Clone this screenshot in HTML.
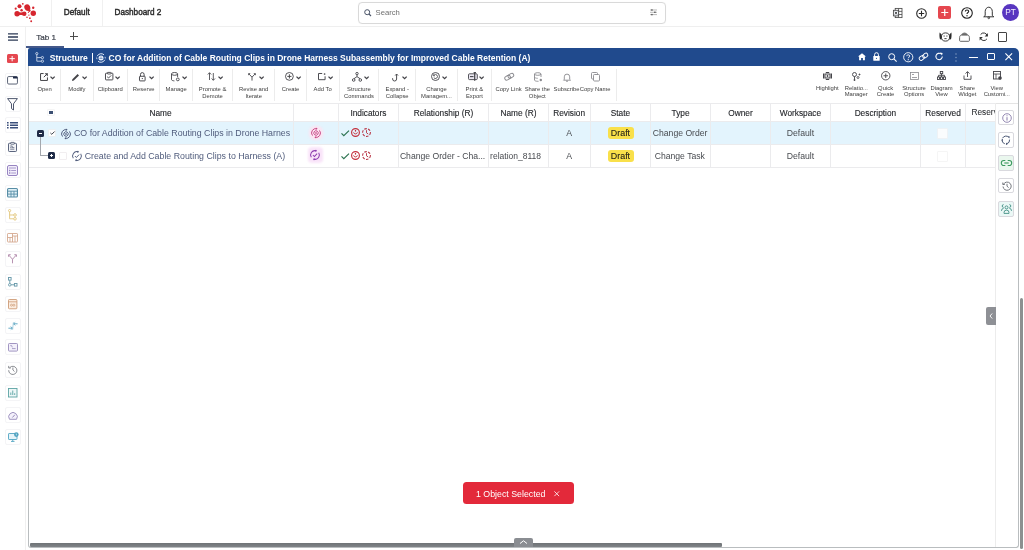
<!DOCTYPE html>
<html><head><meta charset="utf-8">
<style>
*{box-sizing:border-box}
html,body{margin:0;padding:0;width:1024px;height:550px;overflow:hidden;background:#fff;font-family:"Liberation Sans",sans-serif;-webkit-font-smoothing:antialiased}
#root{will-change:transform;position:absolute;left:0;top:0;width:1024px;height:550px;background:#fff}
.a{position:absolute}
.t{position:absolute;white-space:nowrap;line-height:1}
svg{position:absolute;overflow:visible}
.tb{position:absolute;top:0;height:37px}
.tl{position:absolute;width:60px;text-align:center;font-size:5.85px;color:#3d3d3d;line-height:6.7px}
.vs{position:absolute;top:69px;height:32px;width:1px;background:#ececec}
.hd{position:absolute;top:0;height:18px;font-size:8.2px;color:#2c2c2c;text-align:center;line-height:18px;white-space:nowrap}
.cs{position:absolute;top:55px;width:1px;height:64px;background:#e9e9e9}
.cell{position:absolute;font-size:8.7px;color:#5a5a5f;white-space:nowrap;line-height:1}
.sb{position:absolute;left:6px;width:14px;height:14px}
.rp{position:absolute;left:970px;width:16px;height:15px;border:1px solid #dcdcdc;border-radius:2px}
</style></head><body><div id="root">

<!-- TOP BAR -->
<div class="a" style="left:0;top:0;width:1024px;height:27px;border-bottom:1px solid #efefef"></div>
<svg style="left:0;top:0" width="42" height="26" viewBox="0 0 42 26">
 <g fill="#d6262f">
  <ellipse cx="27.3" cy="7.6" rx="2.9" ry="3.3" transform="rotate(-25 27.3 7.6)"/>
  <circle cx="29.3" cy="10.6" r="1.3"/>
  <circle cx="33.3" cy="13.3" r="2.7"/>
  <circle cx="17.1" cy="13.7" r="2.7"/>
  <circle cx="24.2" cy="13.7" r="2.3"/>
  <rect x="17" y="12.4" width="7" height="2.6"/>
  <circle cx="19.5" cy="6.2" r="2"/>
  <circle cx="22.8" cy="3.8" r="0.9"/>
  <circle cx="15.7" cy="8.7" r="1.1"/>
  <circle cx="33.2" cy="7.8" r="1.2"/>
  <circle cx="21.6" cy="10.2" r="1.2"/>
  <circle cx="28.4" cy="12.5" r="0.6"/>
  <circle cx="28.9" cy="15.1" r="0.7"/>
  <circle cx="27" cy="17.3" r="0.8"/>
  <circle cx="29.9" cy="18.2" r="0.9"/>
  <circle cx="31.2" cy="21.3" r="0.95"/>
 </g>
</svg>
<div class="a" style="left:51px;top:0;width:1px;height:26px;background:#f0f0f0"></div>
<div class="a" style="left:102px;top:0;width:1px;height:26px;background:#f0f0f0"></div>
<div class="t" style="left:63.8px;top:9.2px;font-size:8.2px;color:#2a2a2a;-webkit-text-stroke:0.4px #2a2a2a">Default</div>
<div class="t" style="left:114.5px;top:9.2px;font-size:8.2px;color:#2a2a2a;-webkit-text-stroke:0.4px #2a2a2a">Dashboard 2</div>

<div class="a" style="left:358px;top:1.5px;width:308px;height:22px;border:1px solid #d9d9d9;border-radius:4px;box-shadow:0 0 1px #eee"></div>
<svg style="left:364px;top:9px" width="8" height="8" viewBox="0 0 8 8"><circle cx="3.2" cy="3.2" r="2.5" fill="none" stroke="#4a5468" stroke-width="1"/><path d="M5 5L7 7" stroke="#4a5468" stroke-width="1.1"/></svg>
<div class="t" style="left:375.5px;top:8.7px;font-size:7.7px;color:#6f6f6f">Search</div>
<svg style="left:650.3px;top:9px" width="7" height="6.6" viewBox="0 0 7 6.6"><path d="M0 1H7M0 3.3H7M0 5.6H7" stroke="#8a8a8a" stroke-width="0.6"/><rect x="1.2" y="0.3" width="1.4" height="1.4" fill="#555"/><rect x="4.2" y="2.6" width="1.4" height="1.4" fill="#555"/><rect x="1.2" y="4.9" width="1.4" height="1.4" fill="#555"/></svg>

<!-- right top icons -->
<svg style="left:893px;top:7.8px" width="10" height="10" viewBox="0 0 10 10"><rect x="2.2" y="0.4" width="6.8" height="9.2" fill="#fff" stroke="#4a4a4a" stroke-width="0.85"/><path d="M5.6 0.4V9.6M2.2 3.4H9M2.2 6.5H9" stroke="#4a4a4a" stroke-width="0.8"/><rect x="0.4" y="2.3" width="5.2" height="5.6" fill="#eef1f6" stroke="#4a4a4a" stroke-width="0.85"/><path d="M1.9 3.8L4.1 6.4M4.1 3.8L1.9 6.4" stroke="#333" stroke-width="0.8"/></svg>
<svg style="left:916px;top:7.5px" width="11" height="11" viewBox="0 0 11 11"><circle cx="5.5" cy="5.5" r="4.8" fill="none" stroke="#2a2a2a" stroke-width="1.1"/><path d="M5.5 2.8V8.2M2.8 5.5H8.2" stroke="#2a2a2a" stroke-width="1.1"/></svg>
<div class="a" style="left:937.5px;top:6px;width:13.5px;height:13px;background:#e5474f;border-radius:2px"></div>
<svg style="left:937.5px;top:6px" width="13.5" height="13" viewBox="0 0 13.5 13"><path d="M6.75 3V10M3.25 6.5H10.25" stroke="#fff" stroke-width="1.2"/></svg>
<svg style="left:960.5px;top:6.5px" width="12" height="12" viewBox="0 0 12 12"><circle cx="6" cy="6" r="5.3" fill="none" stroke="#222" stroke-width="1.1"/><path d="M4.3 4.6C4.3 3.5 5 3 6 3S7.7 3.6 7.7 4.5C7.7 5.5 6 5.6 6 7" fill="none" stroke="#222" stroke-width="1.1"/><circle cx="6" cy="8.8" r="0.7" fill="#222"/></svg>
<svg style="left:982.8px;top:5.8px" width="11.5" height="13" viewBox="0 0 11.5 13"><path d="M2.2 9.6V5.4C2.2 3.3 3.7 1.2 5.75 1.2S9.3 3.3 9.3 5.4V9.6L10.8 10.8H0.7Z" fill="none" stroke="#2a2a2a" stroke-width="0.95" stroke-linejoin="round"/><circle cx="5.75" cy="11.8" r="0.9" fill="none" stroke="#2a2a2a" stroke-width="0.8"/></svg>
<div class="a" style="left:1002.2px;top:4.1px;width:16.9px;height:16.9px;border-radius:50%;background:#5836c0"></div>
<div class="t" style="left:1002.2px;top:8.2px;width:16.9px;text-align:center;font-size:8.3px;color:#f4efff">PT</div>

<!-- SIDEBAR -->
<div class="a" style="left:25px;top:27px;width:1px;height:523px;background:#f0f0f0"></div>
<svg style="left:7.5px;top:33px" width="10" height="8" viewBox="0 0 10 8"><path d="M0 0.8H10M0 4H10M0 7.2H10" stroke="#2d3a55" stroke-width="1.3"/></svg>

<!-- TAB BAR -->
<div class="t" style="left:36.3px;top:34px;font-size:8.1px;color:#3a3f4a;-webkit-text-stroke:0.2px #3a3f4a">Tab 1</div>
<div class="a" style="left:26px;top:46px;width:38px;height:2px;background:#44598a"></div>
<svg style="left:70px;top:32px" width="8" height="8" viewBox="0 0 8 8"><path d="M3.5 0V8M0 4.5H8" stroke="#444" stroke-width="0.95"/></svg>

<!-- WINDOW -->
<div class="a" style="left:28px;top:60px;width:991px;height:488px;border:1px solid #b9bdbf;border-top:none;border-radius:0 0 3px 3px"></div>
<div class="a" style="left:28px;top:48px;width:991px;height:18px;background:#204a8d;border-radius:2px 5px 0 0"></div>

<div id="win" class="a" style="left:0;top:0;width:1024px;height:550px">
<svg style="left:35px;top:52px" width="10" height="11" viewBox="0 0 10 11"><g fill="none" stroke="#dde6f4" stroke-width="0.8"><circle cx="1.8" cy="1.6" r="1.1"/><path d="M1.8 2.7V9.2H6.2M1.8 5.6H6.2"/><circle cx="7.4" cy="5.6" r="1.15"/><circle cx="7.4" cy="9.2" r="1.15"/></g></svg>
<div class="t" style="left:49.8px;top:54px;font-size:8.55px;font-weight:bold;color:#fff">Structure</div>
<div class="a" style="left:92px;top:53px;width:1.2px;height:9.5px;background:#fff"></div>
<svg style="left:95.5px;top:53px" width="10" height="10" viewBox="0 0 10 10"><g fill="none" stroke="#e6eefb" stroke-width="0.95"><path d="M1.2 3.2A4.3 4.3 0 0 1 8 1.8"/><path d="M8.8 6.8A4.3 4.3 0 0 1 2 8.2"/><path d="M0.7 4.6A4.3 4.3 0 0 0 1 6.2"/><path d="M9.3 5.4A4.3 4.3 0 0 0 9 3.8"/></g><circle cx="5" cy="5" r="2.5" fill="#e6eefb"/><circle cx="5" cy="4" r="0.5" fill="#1f4b8f"/><circle cx="4.1" cy="5.6" r="0.5" fill="#1f4b8f"/><circle cx="5.9" cy="5.6" r="0.5" fill="#1f4b8f"/></svg>
<div class="t" style="left:108.5px;top:54px;font-size:8.5px;font-weight:bold;color:#fff">CO for Addition of Cable Routing Clips in Drone Harness Subassembly for Improved Cable Retention (A)</div>
<svg style="left:857.5px;top:53.3px" width="8" height="7.2" viewBox="0 0 8 7.2"><path d="M4 0.2L8 3.6H6.9V7.2H4.9V5H3.1V7.2H1.1V3.6H0Z" fill="#fff"/></svg>
<svg style="left:873.3px;top:51.8px" width="7" height="9" viewBox="0 0 7 9"><path d="M1.6 4V2.6A1.9 1.9 0 0 1 5.4 2.6V4" fill="none" stroke="#fff" stroke-width="1"/><rect x="0.3" y="4" width="6.4" height="4.8" rx="0.6" fill="#fff"/><circle cx="3.5" cy="6.3" r="0.6" fill="#1f4b8f"/></svg>
<svg style="left:888px;top:52.5px" width="9" height="9" viewBox="0 0 9 9"><circle cx="3.7" cy="3.7" r="3" fill="none" stroke="#fff" stroke-width="1"/><path d="M5.9 5.9L8.6 8.6" stroke="#fff" stroke-width="1.1"/></svg>
<svg style="left:902.7px;top:51.5px" width="10.5" height="10.5" viewBox="0 0 10.5 10.5"><circle cx="5.25" cy="5.25" r="4.6" fill="none" stroke="#fff" stroke-width="0.9"/><path d="M3.8 4.2C3.8 3.2 4.5 2.8 5.25 2.8S6.7 3.3 6.7 4.1C6.7 5 5.25 5.1 5.25 6.3" fill="none" stroke="#fff" stroke-width="0.9"/><circle cx="5.25" cy="7.7" r="0.6" fill="#fff"/></svg>
<svg style="left:918.2px;top:51.8px" width="11" height="9.5" viewBox="0 0 11 9.5"><g fill="none" stroke="#fff" stroke-width="0.95" transform="rotate(-35 5.5 4.75)"><rect x="0.6" y="2.9" width="5.6" height="3.7" rx="1.85"/><rect x="4.8" y="2.9" width="5.6" height="3.7" rx="1.85"/></g></svg>
<svg style="left:934.5px;top:52px" width="8.5" height="9" viewBox="0 0 8.5 9"><path d="M7.3 4.6A3.2 3.2 0 1 1 6 1.9" fill="none" stroke="#fff" stroke-width="1.1"/><path d="M4.8 0.4L7.6 0.9L7 3.6Z" fill="#fff"/></svg>
<svg style="left:955.3px;top:52.5px" width="2" height="9" viewBox="0 0 2 9"><circle cx="1" cy="1" r="0.65" fill="#8fa6c8"/><circle cx="1" cy="4.5" r="0.65" fill="#8fa6c8"/><circle cx="1" cy="8" r="0.65" fill="#8fa6c8"/></svg>
<div class="a" style="left:969px;top:56.8px;width:9px;height:1.2px;background:#fff"></div>
<div class="a" style="left:987px;top:52.5px;width:7.6px;height:7.6px;border:1.1px solid #fff;border-radius:1px"></div>
<svg style="left:1005px;top:52.5px" width="7.5" height="7.5" viewBox="0 0 7.5 7.5"><path d="M0.4 0.4L7.1 7.1M7.1 0.4L0.4 7.1" stroke="#fff" stroke-width="1.1"/></svg>
<div class="vs" style="left:60.0px"></div>
<div class="vs" style="left:92.8px"></div>
<div class="vs" style="left:127.2px"></div>
<div class="vs" style="left:159.3px"></div>
<div class="vs" style="left:192.0px"></div>
<div class="vs" style="left:232.3px"></div>
<div class="vs" style="left:274.2px"></div>
<div class="vs" style="left:305.8px"></div>
<div class="vs" style="left:338.5px"></div>
<div class="vs" style="left:378.4px"></div>
<div class="vs" style="left:415.1px"></div>
<div class="vs" style="left:457.0px"></div>
<div class="vs" style="left:490.8px"></div>
<div class="vs" style="left:615.5px"></div>
<div class="a" style="left:29px;top:102.5px;width:989px;height:1px;background:#e4e4e4"></div>
<svg style="left:39.5px;top:72.8px" width="8" height="8" viewBox="0 0 8 8"><path d="M3.6 0.55H0.55V7.45H7.45V4.4" fill="none" stroke="#434348" stroke-width="1"/><path d="M3.8 4.2L7.2 0.8" stroke="#434348" stroke-width="1"/><path d="M4.6 0.2H7.8V3.4Z" fill="#434348"/></svg>
<svg style="left:49.5px;top:76.3px" width="5.2" height="3.4" viewBox="0 0 5.2 3.4"><path d="M0.5 0.6L2.6 2.7L4.7 0.6" fill="none" stroke="#434348" stroke-width="1.3"/></svg>
<div class="tl" style="left:14.6px;top:86.3px;width:60px">Open</div>
<svg style="left:70.5px;top:72.5px" width="9" height="9" viewBox="0 0 9 9"><path d="M1 8L1.4 6.2L6.6 1L8 2.4L2.8 7.6Z" fill="#434348"/></svg>
<svg style="left:81.5px;top:76.3px" width="5.2" height="3.4" viewBox="0 0 5.2 3.4"><path d="M0.5 0.6L2.6 2.7L4.7 0.6" fill="none" stroke="#434348" stroke-width="1.3"/></svg>
<div class="tl" style="left:46.9px;top:86.3px;width:60px">Modify</div>
<svg style="left:105px;top:72.4px" width="8.4" height="8.4" viewBox="0 0 8.4 8.4"><rect x="0.5" y="1.2" width="7.4" height="6.7" rx="0.6" fill="none" stroke="#434348" stroke-width="0.95"/><rect x="2.5" y="0.4" width="3.4" height="1.6" rx="0.3" fill="#fff" stroke="#434348" stroke-width="0.85"/><path d="M2.2 4.8L3.6 6L6.2 3.4" fill="none" stroke="#434348" stroke-width="0.95"/></svg>
<svg style="left:114.8px;top:76.3px" width="5.2" height="3.4" viewBox="0 0 5.2 3.4"><path d="M0.5 0.6L2.6 2.7L4.7 0.6" fill="none" stroke="#434348" stroke-width="1.3"/></svg>
<div class="tl" style="left:80.3px;top:86.3px;width:60px">Clipboard</div>
<svg style="left:139.2px;top:71.9px" width="6.6" height="9.4" viewBox="0 0 6.6 9.4"><path d="M1.5 4.3V2.4A1.8 1.8 0 0 1 5.1 2.4V4.3" fill="none" stroke="#434348" stroke-width="0.95"/><rect x="0.5" y="4.3" width="5.6" height="4.6" rx="0.4" fill="none" stroke="#434348" stroke-width="0.95"/><rect x="2.8" y="6" width="1" height="1.1" fill="#434348"/></svg>
<svg style="left:149px;top:76.3px" width="5.2" height="3.4" viewBox="0 0 5.2 3.4"><path d="M0.5 0.6L2.6 2.7L4.7 0.6" fill="none" stroke="#434348" stroke-width="1.3"/></svg>
<div class="tl" style="left:113.7px;top:86.3px;width:60px">Reserve</div>
<svg style="left:171px;top:72.2px" width="9" height="9.4" viewBox="0 0 9 9.4"><path d="M0.5 1.9V7.6C0.5 8.3 1.8 8.8 3.4 8.9M6.6 1.9V5" fill="none" stroke="#434348" stroke-width="0.9"/><ellipse cx="3.55" cy="1.9" rx="3.05" ry="1.4" fill="none" stroke="#434348" stroke-width="0.9"/><circle cx="6.8" cy="7.4" r="1.4" fill="#fff" stroke="#434348" stroke-width="0.9"/></svg>
<svg style="left:181.5px;top:76.3px" width="5.2" height="3.4" viewBox="0 0 5.2 3.4"><path d="M0.5 0.6L2.6 2.7L4.7 0.6" fill="none" stroke="#434348" stroke-width="1.3"/></svg>
<div class="tl" style="left:146.1px;top:86.3px;width:60px">Manage</div>
<svg style="left:206.7px;top:72.3px" width="9" height="9" viewBox="0 0 9 9"><path d="M2.5 8V0.8M0.8 2.5L2.5 0.7L4.2 2.5M6.3 1V8.2M4.6 6.5L6.3 8.3L8 6.5" fill="none" stroke="#434348" stroke-width="0.85"/></svg>
<svg style="left:217.7px;top:76.3px" width="5.2" height="3.4" viewBox="0 0 5.2 3.4"><path d="M0.5 0.6L2.6 2.7L4.7 0.6" fill="none" stroke="#434348" stroke-width="1.3"/></svg>
<div class="tl" style="left:182.6px;top:86.3px;width:60px">Promote &amp;</div><div class="tl" style="left:182.6px;top:92.6px;width:60px">Demote</div>
<svg style="left:248.2px;top:72.8px" width="8" height="7.6" viewBox="0 0 8 7.6"><path d="M4 7.6V4.2L1.1 1.1M4 4.2L6.9 1.1" fill="none" stroke="#434348" stroke-width="0.9"/><path d="M0.2 0.2H2.6L0.2 2.6Z M7.8 0.2H5.4L7.8 2.6Z" fill="#434348"/></svg>
<svg style="left:258.5px;top:76.3px" width="5.2" height="3.4" viewBox="0 0 5.2 3.4"><path d="M0.5 0.6L2.6 2.7L4.7 0.6" fill="none" stroke="#434348" stroke-width="1.3"/></svg>
<div class="tl" style="left:223.7px;top:86.3px;width:60px">Revise and</div><div class="tl" style="left:223.7px;top:92.6px;width:60px">Iterate</div>
<svg style="left:284.8px;top:71.9px" width="8.8" height="8.8" viewBox="0 0 8.8 8.8"><circle cx="4.4" cy="4.4" r="3.9" fill="none" stroke="#434348" stroke-width="0.9"/><path d="M4.4 2.3V6.5M2.3 4.4H6.5" stroke="#434348" stroke-width="0.95"/></svg>
<svg style="left:295.6px;top:76.3px" width="5.2" height="3.4" viewBox="0 0 5.2 3.4"><path d="M0.5 0.6L2.6 2.7L4.7 0.6" fill="none" stroke="#434348" stroke-width="1.3"/></svg>
<div class="tl" style="left:260.5px;top:86.3px;width:60px">Create</div>
<svg style="left:318px;top:73.3px" width="7.6" height="7.2" viewBox="0 0 7.6 7.2"><path d="M4.2 0.5H0.5V6.7H7.1V3.3" fill="none" stroke="#434348" stroke-width="0.95"/><circle cx="6.6" cy="1" r="0.85" fill="#434348"/></svg>
<svg style="left:328px;top:76.3px" width="5.2" height="3.4" viewBox="0 0 5.2 3.4"><path d="M0.5 0.6L2.6 2.7L4.7 0.6" fill="none" stroke="#434348" stroke-width="1.3"/></svg>
<div class="tl" style="left:292.6px;top:86.3px;width:60px">Add To</div>
<svg style="left:352px;top:72px" width="10" height="10" viewBox="0 0 10 10"><g fill="none" stroke="#434348" stroke-width="0.9"><circle cx="5" cy="1.6" r="1.2"/><circle cx="1.7" cy="8" r="1.3"/><circle cx="8.3" cy="8" r="1.3"/><path d="M5 2.8V4.6M2 6.7L5 4.6L8 6.7"/></g></svg>
<svg style="left:363.5px;top:76.3px" width="5.2" height="3.4" viewBox="0 0 5.2 3.4"><path d="M0.5 0.6L2.6 2.7L4.7 0.6" fill="none" stroke="#434348" stroke-width="1.3"/></svg>
<div class="tl" style="left:328.9px;top:86.3px;width:60px">Structure</div><div class="tl" style="left:328.9px;top:92.6px;width:60px">Commands</div>
<svg style="left:392.2px;top:73px" width="7" height="8.5" viewBox="0 0 7 8.5"><path d="M4.6 1.2V6A2 2 0 0 1 0.6 6V5.2M3.2 2.5L4.6 1L6 2.5" fill="none" stroke="#434348" stroke-width="0.95"/></svg>
<svg style="left:401.5px;top:76.3px" width="5.2" height="3.4" viewBox="0 0 5.2 3.4"><path d="M0.5 0.6L2.6 2.7L4.7 0.6" fill="none" stroke="#434348" stroke-width="1.3"/></svg>
<div class="tl" style="left:367.2px;top:86.3px;width:60px">Expand -</div><div class="tl" style="left:367.2px;top:92.6px;width:60px">Collapse</div>
<svg style="left:431px;top:72.3px" width="9" height="9" viewBox="0 0 9 9"><circle cx="4.5" cy="4.5" r="4" fill="none" stroke="#434348" stroke-width="0.9"/><path d="M2.8 5.6A2 2 0 1 0 3 3.2M2.5 2.4V3.8H3.9" fill="none" stroke="#434348" stroke-width="0.85"/></svg>
<svg style="left:441.8px;top:76.3px" width="5.2" height="3.4" viewBox="0 0 5.2 3.4"><path d="M0.5 0.6L2.6 2.7L4.7 0.6" fill="none" stroke="#434348" stroke-width="1.3"/></svg>
<div class="tl" style="left:406.5px;top:86.3px;width:60px">Change</div><div class="tl" style="left:406.5px;top:92.6px;width:60px">Managem...</div>
<svg style="left:468px;top:72px" width="10" height="9" viewBox="0 0 10 9"><rect x="0.5" y="1.8" width="8.8" height="5.8" rx="1" fill="#ebe8f2" stroke="#434348" stroke-width="0.9"/><path d="M2 4.6H5.5" stroke="#434348" stroke-width="1.1"/><path d="M6.7 0.4V8.8" stroke="#434348" stroke-width="1.2"/><path d="M5.6 0.5H8" stroke="#434348" stroke-width="0.9"/></svg>
<svg style="left:479.1px;top:76.3px" width="5.2" height="3.4" viewBox="0 0 5.2 3.4"><path d="M0.5 0.6L2.6 2.7L4.7 0.6" fill="none" stroke="#434348" stroke-width="1.3"/></svg>
<div class="tl" style="left:444.4px;top:86.3px;width:60px">Print &amp;</div><div class="tl" style="left:444.4px;top:92.6px;width:60px">Export</div>
<svg style="left:503.5px;top:72px" width="10.5" height="9.5" viewBox="0 0 10.5 9.5"><g fill="none" stroke="#8a8a8f" stroke-width="0.95" transform="rotate(-30 5.25 4.75)"><rect x="0.4" y="2.85" width="5.9" height="3.8" rx="1.9"/><rect x="4.2" y="2.85" width="5.9" height="3.8" rx="1.9"/></g></svg>
<div class="tl" style="left:488.6px;top:86.3px;width:40px">Copy Link</div>
<svg style="left:534px;top:72.2px" width="9" height="10" viewBox="0 0 9 10"><path d="M0.5 2V8C0.5 8.8 2 9.3 3.8 9.3H4.5M7 2V5" fill="none" stroke="#8a8a8f" stroke-width="0.9"/><ellipse cx="3.75" cy="2" rx="3.25" ry="1.3" fill="none" stroke="#8a8a8f" stroke-width="0.9"/><path d="M0.5 5C0.5 5.8 2 6.3 3.8 6.3" fill="none" stroke="#8a8a8f" stroke-width="0.8"/><circle cx="6.8" cy="8" r="1.2" fill="#8a8a8f"/></svg>
<div class="tl" style="left:517.3px;top:86.3px;width:40px">Share the</div><div class="tl" style="left:517.3px;top:92.6px;width:40px">Object</div>
<svg style="left:562.5px;top:72.5px" width="8" height="9" viewBox="0 0 8 9"><path d="M1.3 6.4V3.8A2.7 2.7 0 0 1 6.7 3.8V6.4L7.5 7.2H0.5Z" fill="none" stroke="#8a8a8f" stroke-width="0.9"/><path d="M3 8.2H5" stroke="#8a8a8f" stroke-width="0.9"/></svg>
<div class="tl" style="left:546.5px;top:86.3px;width:40px">Subscribe</div>
<svg style="left:591px;top:72px" width="9" height="9.5" viewBox="0 0 9 9.5"><rect x="0.5" y="0.5" width="6" height="6.5" rx="1" fill="none" stroke="#8a8a8f" stroke-width="0.9"/><rect x="2.5" y="2.5" width="6" height="6.5" rx="1" fill="#fff" stroke="#8a8a8f" stroke-width="0.9"/></svg>
<div class="tl" style="left:575.2px;top:86.3px;width:40px">Copy Name</div>
<svg style="left:823px;top:72.2px" width="9" height="8" viewBox="0 0 9 8"><rect x="2" y="2" width="5" height="4" fill="none" stroke="#434348" stroke-width="1"/><path d="M0.6 1.5V6.5M8.4 1.5V6.5" stroke="#434348" stroke-width="1.2"/><path d="M2.8 0.5H6.2M2.8 7.5H6.2" stroke="#434348" stroke-width="1"/><circle cx="4.5" cy="4" r="0.9" fill="#434348"/></svg>
<div class="tl" style="left:810.3px;top:84.8px;width:34px">Highlight</div>
<svg style="left:852px;top:71.7px" width="9" height="9" viewBox="0 0 9 9"><circle cx="2.5" cy="2.5" r="2" fill="none" stroke="#434348" stroke-width="0.9"/><path d="M2.5 4.5V7.5" stroke="#434348" stroke-width="0.9"/><circle cx="2.5" cy="8" r="0.9" fill="#434348"/><circle cx="6" cy="5.5" r="1" fill="none" stroke="#434348" stroke-width="0.8"/><path d="M6.5 2.5H8.5M7.5 1.5V3.5" stroke="#434348" stroke-width="0.7"/></svg>
<div class="tl" style="left:839.3px;top:84.8px;width:34px">Relatio...</div><div class="tl" style="left:839.3px;top:91.1px;width:34px">Manager</div>
<svg style="left:880.8px;top:71.2px" width="9.5" height="9.5" viewBox="0 0 9.5 9.5"><circle cx="4.75" cy="4.75" r="4.2" fill="none" stroke="#434348" stroke-width="0.9"/><path d="M4.75 2.5V7M2.5 4.75H7" stroke="#434348" stroke-width="0.9"/></svg>
<div class="tl" style="left:868.6px;top:84.8px;width:34px">Quick</div><div class="tl" style="left:868.6px;top:91.1px;width:34px">Create</div>
<svg style="left:909.5px;top:72.2px" width="9" height="8" viewBox="0 0 9 8"><rect x="0.5" y="0.5" width="8" height="7" fill="none" stroke="#8a8a8f" stroke-width="0.8"/><path d="M2 2.5H4M2 5.5H7" stroke="#8a8a8f" stroke-width="0.8"/></svg>
<div class="tl" style="left:897.0px;top:84.8px;width:34px">Structure</div><div class="tl" style="left:897.0px;top:91.1px;width:34px">Options</div>
<svg style="left:937px;top:71.2px" width="9" height="9" viewBox="0 0 9 9"><g fill="none" stroke="#434348" stroke-width="0.9"><rect x="3.3" y="0.5" width="2.4" height="2.2"/><path d="M4.5 2.7V4.3M1.5 6V4.3H7.5V6M4.5 4.3V6"/><rect x="0.5" y="6" width="2" height="2.5"/><rect x="3.5" y="6" width="2" height="2.5"/><rect x="6.5" y="6" width="2" height="2.5"/></g></svg>
<div class="tl" style="left:924.5px;top:84.8px;width:34px">Diagram</div><div class="tl" style="left:924.5px;top:91.1px;width:34px">View</div>
<svg style="left:963px;top:71.2px" width="9" height="9" viewBox="0 0 9 9"><path d="M4.5 6V0.8M2.5 2.6L4.5 0.6L6.5 2.6M1 4.5V8.3H8V4.5" fill="none" stroke="#434348" stroke-width="0.9"/></svg>
<div class="tl" style="left:950.3px;top:84.8px;width:34px">Share</div><div class="tl" style="left:950.3px;top:91.1px;width:34px">Widget</div>
<svg style="left:992.5px;top:71.2px" width="9" height="9" viewBox="0 0 9 9"><rect x="0.5" y="0.5" width="7" height="7.5" fill="none" stroke="#434348" stroke-width="0.9"/><path d="M0.5 3H7.5M3 3V8" stroke="#434348" stroke-width="0.8"/><circle cx="7" cy="7" r="1.8" fill="#434348"/></svg>
<div class="tl" style="left:979.8px;top:84.8px;width:34px">View</div><div class="tl" style="left:979.8px;top:91.1px;width:34px">Customi...</div>
<div class="a" style="left:29px;top:121px;width:966.5px;height:23px;background:#e3f4fd"></div>
<div class="a" style="left:29px;top:103px;width:966.5px;height:1px;background:#ebebed"></div>
<div class="a" style="left:29px;top:120.5px;width:966.5px;height:1px;background:#ebebed"></div>
<div class="a" style="left:29px;top:143.5px;width:966.5px;height:1px;background:#ebebed"></div>
<div class="a" style="left:29px;top:166.5px;width:966.5px;height:1px;background:#ebebed"></div>
<div class="a" style="left:292.8px;top:103px;width:1px;height:64px;background:#ebebed"></div>
<div class="a" style="left:337.9px;top:103px;width:1px;height:64px;background:#ebebed"></div>
<div class="a" style="left:397.8px;top:103px;width:1px;height:64px;background:#ebebed"></div>
<div class="a" style="left:488.1px;top:103px;width:1px;height:64px;background:#ebebed"></div>
<div class="a" style="left:547.9px;top:103px;width:1px;height:64px;background:#ebebed"></div>
<div class="a" style="left:589.5px;top:103px;width:1px;height:64px;background:#ebebed"></div>
<div class="a" style="left:650.3px;top:103px;width:1px;height:64px;background:#ebebed"></div>
<div class="a" style="left:710.0px;top:103px;width:1px;height:64px;background:#ebebed"></div>
<div class="a" style="left:770.1px;top:103px;width:1px;height:64px;background:#ebebed"></div>
<div class="a" style="left:829.7px;top:103px;width:1px;height:64px;background:#ebebed"></div>
<div class="a" style="left:920.1px;top:103px;width:1px;height:64px;background:#ebebed"></div>
<div class="a" style="left:965.1px;top:103px;width:1px;height:64px;background:#ebebed"></div>
<div class="a" style="left:995.3px;top:103px;width:1px;height:444px;background:#ececec"></div>
<div class="t" style="left:110.5px;top:109px;width:100px;text-align:center;font-size:8.3px;color:#25272b;-webkit-text-stroke:0.12px #25272b">Name</div>
<div class="t" style="left:318.4px;top:109px;width:100px;text-align:center;font-size:8.3px;color:#25272b;-webkit-text-stroke:0.12px #25272b">Indicators</div>
<div class="t" style="left:393.5px;top:109px;width:100px;text-align:center;font-size:8.3px;color:#25272b;-webkit-text-stroke:0.12px #25272b">Relationship (R)</div>
<div class="t" style="left:468.5px;top:109px;width:100px;text-align:center;font-size:8.3px;color:#25272b;-webkit-text-stroke:0.12px #25272b">Name (R)</div>
<div class="t" style="left:519.2px;top:109px;width:100px;text-align:center;font-size:8.3px;color:#25272b;-webkit-text-stroke:0.12px #25272b">Revision</div>
<div class="t" style="left:570.4px;top:109px;width:100px;text-align:center;font-size:8.3px;color:#25272b;-webkit-text-stroke:0.12px #25272b">State</div>
<div class="t" style="left:630.6px;top:109px;width:100px;text-align:center;font-size:8.3px;color:#25272b;-webkit-text-stroke:0.12px #25272b">Type</div>
<div class="t" style="left:690.5px;top:109px;width:100px;text-align:center;font-size:8.3px;color:#25272b;-webkit-text-stroke:0.12px #25272b">Owner</div>
<div class="t" style="left:750.4px;top:109px;width:100px;text-align:center;font-size:8.3px;color:#25272b;-webkit-text-stroke:0.12px #25272b">Workspace</div>
<div class="t" style="left:825.4px;top:109px;width:100px;text-align:center;font-size:8.3px;color:#25272b;-webkit-text-stroke:0.12px #25272b">Description</div>
<div class="t" style="left:893.1px;top:109px;width:100px;text-align:center;font-size:8.3px;color:#25272b;-webkit-text-stroke:0.12px #25272b">Reserved</div>
<div class="a" style="left:966px;top:103.5px;width:29px;height:17px;overflow:hidden"><div class="t" style="left:5.5px;top:4.9px;font-size:8.3px;color:#2a2c30;-webkit-text-stroke:0.05px #2a2c30">Reserved by</div></div>
<div class="a" style="left:47.2px;top:109px;width:7.5px;height:6.5px;border:1px solid #f5f5f5;border-radius:1px"></div>
<div class="a" style="left:49px;top:110.7px;width:4px;height:3.3px;background:#3b4f72"></div>
<div class="a" style="left:37px;top:129.8px;width:7.3px;height:7px;background:#1f2b47;border-radius:1.5px"></div>
<div class="a" style="left:38.9px;top:132.8px;width:3.5px;height:1px;background:#fff"></div>
<div class="a" style="left:47.8px;top:129px;width:8px;height:8px;background:#fff;border:1px solid #edf0f2;border-radius:1px"></div>
<svg style="left:49.5px;top:131px" width="5" height="4" viewBox="0 0 5 4"><path d="M0.4 2L1.8 3.3L4.6 0.5" fill="none" stroke="#3a4048" stroke-width="1"/></svg>
<svg style="left:60.9px;top:128.6px" width="10" height="10" viewBox="0 0 10 10"><g transform="rotate(35 5 5)"><g fill="none" stroke="#505c7c" stroke-width="0.9"><path d="M3.2 1A4.3 4.3 0 0 0 3.6 9.1"/><path d="M6.8 9A4.3 4.3 0 0 0 6.4 0.9"/><circle cx="5" cy="5" r="2.2"/></g><path d="M1.8 0.6L3.9 0.5L3.1 2.4Z M8.2 9.4L6.1 9.5L6.9 7.6Z" fill="#505c7c"/></g><path d="M4.2 4.2L5.8 5.8M5.8 4.2L4.2 5.8" stroke="#505c7c" stroke-width="0.7"/></svg>
<div class="a" style="left:74px;top:121px;width:216px;height:23px;overflow:hidden"><div class="t" style="left:0;top:7.6px;font-size:8.8px;color:#505c7c">CO for Addition of Cable Routing Clips in Drone Harness Subassembly</div></div>
<div class="a" style="left:40px;top:137px;width:1px;height:18.5px;background:#a3a7ad"></div>
<div class="a" style="left:40px;top:155px;width:8px;height:1px;background:#a3a7ad"></div>
<div class="a" style="left:47.8px;top:152.3px;width:7.5px;height:6.8px;background:#1f2b47;border-radius:1.5px"></div>
<div class="a" style="left:49.8px;top:155.2px;width:3.5px;height:1px;background:#fff"></div>
<div class="a" style="left:51.05px;top:153.9px;width:1px;height:3.6px;background:#fff"></div>
<div class="a" style="left:58.5px;top:151.5px;width:8px;height:8px;background:#fff;border:1px solid #f1eef0;border-radius:1px"></div>
<svg style="left:71.5px;top:150.8px" width="10" height="10" viewBox="0 0 10 10"><g transform="rotate(35 5 5)"><g fill="none" stroke="#505c7c" stroke-width="0.95"><path d="M3.3 1A4.3 4.3 0 0 0 3.3 9"/><path d="M6.7 9A4.3 4.3 0 0 0 6.7 1"/></g><circle cx="3.3" cy="1" r="0.9" fill="#505c7c"/><circle cx="6.7" cy="9" r="0.9" fill="#505c7c"/></g><path d="M2.9 5L4.4 6.5L7.1 3.6" fill="none" stroke="#505c7c" stroke-width="0.95"/></svg>
<div class="t" style="left:84.7px;top:151.5px;font-size:8.8px;color:#505c7c">Create and Add Cable Routing Clips to Harness (A)</div>
<div class="a" style="left:308.5px;top:126px;width:14px;height:13.5px;background:#fce4f2;border-radius:6px;filter:blur(1.2px)"></div>
<svg style="left:311px;top:127.9px" width="10" height="10" viewBox="0 0 10 10"><g transform="rotate(35 5 5)"><g fill="none" stroke="#c84a86" stroke-width="0.9"><path d="M3.2 1A4.3 4.3 0 0 0 3.6 9.1"/><path d="M6.8 9A4.3 4.3 0 0 0 6.4 0.9"/><circle cx="5" cy="5" r="2.2"/></g><path d="M1.8 0.6L3.9 0.5L3.1 2.4Z M8.2 9.4L6.1 9.5L6.9 7.6Z" fill="#c84a86"/></g><path d="M4.2 4.2L5.8 5.8M5.8 4.2L4.2 5.8" stroke="#c84a86" stroke-width="0.7"/></svg>
<div class="a" style="left:307.8px;top:147px;width:15px;height:15.6px;background:#f9e4f9;border-radius:4px;filter:blur(1px)"></div>
<svg style="left:310.3px;top:150.2px" width="10" height="10" viewBox="0 0 10 10"><g transform="rotate(35 5 5)"><g fill="none" stroke="#8c3cae" stroke-width="1.05"><path d="M3.3 1A4.3 4.3 0 0 0 3.3 9"/><path d="M6.7 9A4.3 4.3 0 0 0 6.7 1"/></g><circle cx="3.3" cy="1" r="0.9" fill="#8c3cae"/><circle cx="6.7" cy="9" r="0.9" fill="#8c3cae"/></g><path d="M2.9 5L4.4 6.5L7.1 3.6" fill="none" stroke="#8c3cae" stroke-width="1.05"/></svg>
<svg style="left:340.8px;top:129.8px" width="8.5" height="6.5" viewBox="0 0 8.5 6.5"><path d="M0.5 3.4L2.8 5.7L8 0.6" fill="none" stroke="#2c7350" stroke-width="1.15"/></svg>
<svg style="left:351px;top:128px" width="9" height="9" viewBox="0 0 9 9"><circle cx="4.5" cy="4.5" r="3.9" fill="none" stroke="#c3303d" stroke-width="1.15"/><path d="M4.5 2V3.6" stroke="#c3303d" stroke-width="1.2"/><path d="M2.6 4.4A1.95 1.95 0 0 0 6.4 4.4" fill="none" stroke="#c3303d" stroke-width="1"/></svg>
<svg style="left:362.3px;top:128px" width="9" height="9" viewBox="0 0 9 9"><circle cx="4.5" cy="4.5" r="3.9" fill="none" stroke="#b83646" stroke-width="1.05" stroke-dasharray="2.6 1.3"/><path d="M4.5 2.2V4.8L6.2 6" fill="none" stroke="#b83646" stroke-width="0.95"/></svg>
<svg style="left:340.8px;top:152.8px" width="8.5" height="6.5" viewBox="0 0 8.5 6.5"><path d="M0.5 3.4L2.8 5.7L8 0.6" fill="none" stroke="#2c7350" stroke-width="1.15"/></svg>
<svg style="left:351px;top:151px" width="9" height="9" viewBox="0 0 9 9"><circle cx="4.5" cy="4.5" r="3.9" fill="none" stroke="#c3303d" stroke-width="1.15"/><path d="M4.5 2V3.6" stroke="#c3303d" stroke-width="1.2"/><path d="M2.6 4.4A1.95 1.95 0 0 0 6.4 4.4" fill="none" stroke="#c3303d" stroke-width="1"/></svg>
<svg style="left:362.3px;top:151px" width="9" height="9" viewBox="0 0 9 9"><circle cx="4.5" cy="4.5" r="3.9" fill="none" stroke="#b83646" stroke-width="1.05" stroke-dasharray="2.6 1.3"/><path d="M4.5 2.2V4.8L6.2 6" fill="none" stroke="#b83646" stroke-width="0.95"/></svg>
<div class="t" style="left:559.2px;top:129.2px;width:20px;text-align:center;font-size:8.7px;color:#484b50">A</div>
<div class="a" style="left:607.5px;top:127.4px;width:26px;height:12px;background:#f9e04a;border-radius:3px"></div>
<div class="t" style="left:607.8px;top:129.3px;width:25.3px;text-align:center;font-size:8.9px;color:#262318;-webkit-text-stroke:0.1px #262318">Draft</div>
<div class="t" style="left:770.4px;top:129.2px;width:60px;text-align:center;font-size:8.7px;color:#484b50">Default</div>
<div class="t" style="left:559.2px;top:152.2px;width:20px;text-align:center;font-size:8.7px;color:#484b50">A</div>
<div class="a" style="left:607.5px;top:150.4px;width:26px;height:12px;background:#f9e04a;border-radius:3px"></div>
<div class="t" style="left:607.8px;top:152.3px;width:25.3px;text-align:center;font-size:8.9px;color:#262318;-webkit-text-stroke:0.1px #262318">Draft</div>
<div class="t" style="left:770.4px;top:152.2px;width:60px;text-align:center;font-size:8.7px;color:#484b50">Default</div>
<div class="t" style="left:652.8px;top:129.2px;font-size:8.65px;color:#484b50">Change Order</div>
<div class="t" style="left:654.7px;top:152.2px;font-size:8.65px;color:#484b50">Change Task</div>
<div class="t" style="left:399.9px;top:152.2px;font-size:8.65px;color:#484b50">Change Order - Cha...</div>
<div class="t" style="left:490.1px;top:152.2px;font-size:8.5px;color:#484b50">relation_8118</div>
<div class="a" style="left:937.3px;top:128.4px;width:10.3px;height:10.3px;background:#fafcfd;border:1px solid #eef2f5;border-radius:1px"></div>
<div class="a" style="left:937.3px;top:151.4px;width:10.3px;height:10.3px;background:#fff;border:1px solid #f5f5f5;border-radius:1px"></div>
<div class="a" style="left:998.3px;top:110px;width:16.2px;height:15.4px;border:1px solid #d9d9de;border-radius:2px;background:#fff"></div><svg style="left:1001.5px;top:112.8px" width="10" height="10" viewBox="0 0 10 10"><circle cx="5" cy="5" r="4.3" fill="none" stroke="#7a6ca0" stroke-width="0.8"/><path d="M5 4.2V7.6" stroke="#7a6ca0" stroke-width="0.9"/><circle cx="5" cy="2.8" r="0.55" fill="#7a6ca0"/></svg>
<div class="a" style="left:998.3px;top:132.4px;width:16.2px;height:15.4px;border:1px solid #d9d9de;border-radius:2px;background:#fff"></div><svg style="left:1001.4px;top:135px" width="10" height="10" viewBox="0 0 10 10"><g fill="none" stroke="#3a4868" stroke-width="0.9"><path d="M1.5 3.2A4 4 0 0 1 7.8 2.2"/><path d="M8.6 4.6A4 4 0 0 1 5.8 8.8"/><path d="M3.8 8.8A4 4 0 0 1 1 4.8"/></g><path d="M7 1.2L8.8 1.6L8.2 3.4Z M5.2 7.6L6.6 9.2L4.9 9.9Z M0.2 5.2L1.6 3.8L2.1 5.5Z" fill="#3a4868"/></svg>
<div class="a" style="left:998.3px;top:155.3px;width:16.2px;height:15.4px;border:1px solid #d9d9de;border-radius:2px;background:#eaf7ee"></div><svg style="left:1001px;top:158.8px" width="11" height="8" viewBox="0 0 11 8"><g fill="none" stroke="#3a9a5e" stroke-width="1.1"><path d="M4.3 1.5H2.8A2.5 2.5 0 0 0 2.8 6.5H4.3"/><path d="M6.7 1.5H8.2A2.5 2.5 0 0 1 8.2 6.5H6.7"/><path d="M3.3 4H7.7"/></g></svg>
<div class="a" style="left:998.3px;top:177.8px;width:16.2px;height:15.4px;border:1px solid #d9d9de;border-radius:2px;background:#fff"></div><svg style="left:1001.5px;top:180.8px" width="10" height="10" viewBox="0 0 10 10"><path d="M1.5 3.2A4.1 4.1 0 1 1 1 5.5M0.8 1.5V3.5H2.8" fill="none" stroke="#666a70" stroke-width="0.9"/><path d="M5 2.8V5.2L6.6 6.6" fill="none" stroke="#666a70" stroke-width="0.9"/></svg>
<div class="a" style="left:998.3px;top:201.2px;width:16.2px;height:15.4px;border:1px solid #d9d9de;border-radius:2px;background:#ebf8f6"></div><svg style="left:1001px;top:203.8px" width="11" height="10" viewBox="0 0 11 10"><g fill="none" stroke="#3a8a80" stroke-width="0.85"><circle cx="5.5" cy="3.4" r="1.5"/><path d="M3 9.4V8.6A2.5 2.5 0 0 1 8 8.6V9.4Z"/><path d="M2.6 0.6A1.4 1.4 0 0 0 2.6 3.4M0.6 7V6.2A2 2 0 0 1 2.6 4.4"/><path d="M8.4 0.6A1.4 1.4 0 0 1 8.4 3.4M10.4 7V6.2A2 2 0 0 0 8.4 4.4"/></g></svg>
<div class="a" style="left:986px;top:306.7px;width:9.6px;height:18.8px;background:#8e9095;border-radius:2px 0 0 2px"></div>
<svg style="left:988.5px;top:313px" width="4" height="6" viewBox="0 0 4 6"><path d="M3.2 0.5L1 3L3.2 5.5" fill="none" stroke="#fff" stroke-width="0.9"/></svg>
<div class="a" style="left:7.4px;top:54px;width:10.3px;height:9.3px;background:#e5474f;border-radius:1.5px"></div>
<svg style="left:7.4px;top:54px" width="10.3" height="9.3" viewBox="0 0 10.3 9.3"><path d="M5.15 2V7.3M2.5 4.65H7.8" stroke="#fff" stroke-width="1"/></svg>
<div class="a" style="left:5px;top:72.6px;width:15.5px;height:16px;border:1px solid #f4f4f6;border-radius:2px"></div>
<svg style="left:7px;top:76.3px" width="11" height="8.6" viewBox="0 0 11 8.6"><rect x="0.55" y="0.55" width="9.9" height="7.5" rx="1.2" fill="none" stroke="#4a5266" stroke-width="0.9"/><rect x="6" y="0.4" width="4.5" height="2.2" rx="0.5" fill="#1f2b47"/></svg>
<div class="a" style="left:5px;top:96.3px;width:15.5px;height:16px;border:1px solid #f4f4f6;border-radius:2px"></div>
<svg style="left:7px;top:97.8px" width="11" height="13" viewBox="0 0 11 13"><path d="M0.6 0.6H10.4L6.5 5.8V12L4.5 10.6V5.8Z" fill="none" stroke="#3c4660" stroke-width="0.9" stroke-linejoin="round"/></svg>
<div class="a" style="left:5px;top:117.0px;width:15.5px;height:16px;border:1px solid #f4f4f6;border-radius:2px"></div>
<svg style="left:7px;top:121.7px" width="11" height="6.5" viewBox="0 0 11 6.5"><g fill="#3a4f7a"><rect x="0" y="0" width="1.6" height="1.5"/><rect x="0" y="2.5" width="1.6" height="1.5"/><rect x="0" y="5" width="1.6" height="1.5"/><rect x="3" y="0" width="8" height="1.5"/><rect x="3" y="2.5" width="8" height="1.5"/><rect x="3" y="5" width="8" height="1.5"/></g></svg>
<div class="a" style="left:5px;top:139.5px;width:15.5px;height:16px;border:1px solid #f4f4f6;border-radius:2px"></div>
<svg style="left:8.2px;top:142.3px" width="9" height="10" viewBox="0 0 9 10"><rect x="0.5" y="1.3" width="8" height="8.2" rx="0.8" fill="#f3f4f7" stroke="#4a5570" stroke-width="0.9"/><rect x="2.7" y="0.4" width="3.6" height="1.8" rx="0.4" fill="#fff" stroke="#4a5570" stroke-width="0.8"/><path d="M2.2 4H4.2M2.2 5.6H3.5M2.2 7.2H6.3M4.2 4V5.6H6.3" fill="none" stroke="#4a5570" stroke-width="0.7"/></svg>
<div class="a" style="left:5px;top:162.0px;width:15.5px;height:16px;border:1px solid #f4f4f6;border-radius:2px"></div>
<svg style="opacity:0.78;left:7px;top:164.7px" width="11" height="11" viewBox="0 0 11 11"><rect x="0.5" y="0.5" width="10" height="10" rx="1.5" fill="#f0ebfa" stroke="#7a62b0" stroke-width="1"/><path d="M2 3H9M4.2 5.5H9M4.2 8H9" stroke="#7a62b0" stroke-width="0.8"/><rect x="2" y="4.8" width="1.4" height="1.4" fill="#7a62b0"/><rect x="2" y="7.3" width="1.4" height="1.4" fill="#7a62b0"/></svg>
<div class="a" style="left:5px;top:184.5px;width:15.5px;height:16px;border:1px solid #f4f4f6;border-radius:2px"></div>
<svg style="opacity:0.78;left:7px;top:188.3px" width="11" height="9.6" viewBox="0 0 11 9.6"><rect x="0.55" y="0.55" width="9.9" height="8.5" rx="1" fill="#d8eef6" stroke="#2a6f8e" stroke-width="1.1"/><path d="M0.55 3.2H10.45M0.55 6.1H10.45M4 3.2V9M7 3.2V9" stroke="#2a6f8e" stroke-width="0.9"/></svg>
<div class="a" style="left:5px;top:206.5px;width:15.5px;height:16px;border:1px solid #f4f4f6;border-radius:2px"></div>
<svg style="opacity:0.78;left:8.3px;top:209.3px" width="9" height="11.4" viewBox="0 0 9 11.4"><g fill="none" stroke="#d9b656" stroke-width="0.9"><circle cx="1.6" cy="1.6" r="1.1"/><path d="M1.6 2.7V9.8H5.7M1.6 6H5.7"/><circle cx="7" cy="6" r="1.3"/><circle cx="7" cy="9.8" r="1.3"/></g></svg>
<div class="a" style="left:5px;top:228.5px;width:15.5px;height:16px;border:1px solid #f4f4f6;border-radius:2px"></div>
<svg style="opacity:0.78;left:7px;top:232.8px" width="11" height="9.5" viewBox="0 0 11 9.5"><g fill="none" stroke="#c99272" stroke-width="0.9"><rect x="0.5" y="0.5" width="10" height="8.5" rx="0.6"/><path d="M5.5 0.5V9M0.5 4.5H5.5M5.5 3H10.5M3 4.5V9M8 3V9"/></g></svg>
<div class="a" style="left:5px;top:251.0px;width:15.5px;height:16px;border:1px solid #f4f4f6;border-radius:2px"></div>
<svg style="opacity:0.78;left:7.9px;top:254.3px" width="9" height="9.5" viewBox="0 0 9 9.5"><g fill="none" stroke="#9a6490" stroke-width="0.9"><path d="M4.5 9.3V5.3L1 1.3M4.5 5.3L8 1.3M0.6 2.8V0.7H2.7M6.3 0.7H8.4V2.8"/></g></svg>
<div class="a" style="left:5px;top:273.5px;width:15.5px;height:16px;border:1px solid #f4f4f6;border-radius:2px"></div>
<svg style="opacity:0.78;left:7.9px;top:276.5px" width="9.6" height="9.6" viewBox="0 0 9.6 9.6"><g fill="none" stroke="#3a7a90" stroke-width="0.9"><rect x="0.5" y="0.5" width="2.6" height="2.6"/><path d="M1.8 3.1V6.5"/><circle cx="1.8" cy="7.8" r="1.3"/><path d="M3.1 7.8H6.4"/><rect x="6.4" y="6.5" width="2.6" height="2.6"/></g></svg>
<div class="a" style="left:5px;top:296.0px;width:15.5px;height:16px;border:1px solid #f4f4f6;border-radius:2px"></div>
<svg style="opacity:0.78;left:7.9px;top:299.4px" width="9.4" height="10.3" viewBox="0 0 9.4 10.3"><rect x="0.5" y="0.5" width="8.4" height="9.3" rx="0.8" fill="#fbe8d8" stroke="#c07f50" stroke-width="0.9"/><path d="M0.5 2.8H8.9" stroke="#c07f50" stroke-width="0.8"/><circle cx="3.5" cy="6.2" r="1" fill="none" stroke="#c07f50" stroke-width="0.7"/><circle cx="5.9" cy="6.2" r="1" fill="none" stroke="#c07f50" stroke-width="0.7"/></svg>
<div class="a" style="left:5px;top:318.3px;width:15.5px;height:16px;border:1px solid #f4f4f6;border-radius:2px"></div>
<svg style="opacity:0.78;left:7.9px;top:322.4px" width="10" height="8" viewBox="0 0 10 8"><g fill="none" stroke="#2a8ab0" stroke-width="0.9"><path d="M0.4 6.2H4.2M2.8 4.6L4.3 6.2L2.8 7.6M9.6 1.8H5.8M7.2 0.4L5.7 1.8L7.2 3.4"/><path d="M4.6 7.8L5.4 0.2" stroke-width="0.5"/></g></svg>
<div class="a" style="left:5px;top:339.2px;width:15.5px;height:16px;border:1px solid #f4f4f6;border-radius:2px"></div>
<svg style="opacity:0.78;left:7.6px;top:343px" width="10" height="8.6" viewBox="0 0 10 8.6"><rect x="0.5" y="0.5" width="9" height="7.6" rx="0.8" fill="#f1eefa" stroke="#7a6aa8" stroke-width="0.9"/><path d="M2.3 2.6H3.6L4.3 4.3M4 5.6H7.6" fill="none" stroke="#7a6aa8" stroke-width="0.8"/></svg>
<div class="a" style="left:5px;top:361.5px;width:15.5px;height:16px;border:1px solid #f4f4f6;border-radius:2px"></div>
<svg style="opacity:0.78;left:8px;top:365px" width="9.5" height="9.5" viewBox="0 0 9.5 9.5"><path d="M1.7 2.7A4.1 4.1 0 1 1 0.7 5.2M0.7 0.9V3H2.8" fill="none" stroke="#5b5f66" stroke-width="0.9"/><path d="M4.9 2.5V5L6.5 6.5" fill="none" stroke="#5b5f66" stroke-width="0.9"/></svg>
<div class="a" style="left:5px;top:384.5px;width:15.5px;height:16px;border:1px solid #f4f4f6;border-radius:2px"></div>
<svg style="opacity:0.78;left:8px;top:388px" width="9.5" height="9.5" viewBox="0 0 9.5 9.5"><rect x="0.5" y="0.5" width="8.5" height="8.5" fill="#eaf6f6" stroke="#2f8a8a" stroke-width="0.9"/><path d="M2.8 7V4.5M4.75 7V2.5M6.7 7V5.2" stroke="#2f8a8a" stroke-width="0.9"/></svg>
<div class="a" style="left:5px;top:407.3px;width:15.5px;height:16px;border:1px solid #f4f4f6;border-radius:2px"></div>
<svg style="opacity:0.78;left:8px;top:411.5px" width="10" height="8" viewBox="0 0 10 8"><path d="M1.5 7.3A4.3 4.3 0 1 1 8.5 7.3Z" fill="#f1eefa" stroke="#7a6aa8" stroke-width="0.9" stroke-linejoin="round"/><path d="M4.4 5.5L6.8 2.8" stroke="#7a6aa8" stroke-width="1"/></svg>
<div class="a" style="left:5px;top:429.0px;width:15.5px;height:16px;border:1px solid #f4f4f6;border-radius:2px"></div>
<svg style="opacity:0.78;left:7.6px;top:431.6px" width="11" height="10" viewBox="0 0 11 10"><rect x="0.5" y="1.5" width="8.5" height="6" rx="0.6" fill="#dff2f8" stroke="#1f8ab0" stroke-width="0.9"/><path d="M3 9.4H6.5M4.75 7.5V9.4" stroke="#1f8ab0" stroke-width="0.9"/><circle cx="8.3" cy="2.6" r="2.3" fill="#1f8ab0"/><path d="M8.3 1.6V2.8L9 3.3" fill="none" stroke="#fff" stroke-width="0.6"/></svg>
<svg style="left:939px;top:32px" width="13" height="10" viewBox="0 0 13 10"><circle cx="6.5" cy="5" r="4.1" fill="#fff" stroke="#333" stroke-width="0.95"/><path d="M0.6 0.6L2.4 2.2V7.6L1 7.2C0.4 5.5 0.3 3 0.6 0.6Z M12.4 0.6L10.6 2.2V7.6L12 7.2C12.6 5.5 12.7 3 12.4 0.6Z" fill="#2a2a2a"/><rect x="4.6" y="3.4" width="1" height="1.3" fill="#555"/><rect x="7.4" y="3.4" width="1" height="1.3" fill="#555"/><path d="M5.4 6.6H7.6" stroke="#333" stroke-width="0.9"/></svg>
<svg style="left:958.8px;top:32.2px" width="11" height="9.8" viewBox="0 0 11 9.8"><path d="M2 3.2C2.8 1.3 4 0.5 5.5 0.5S8.2 1.3 9 3.2Z" fill="#7a7a7a"/><path d="M0.6 8.6V5.6C0.6 4 1.5 3.1 2.5 3.1H8.5C9.5 3.1 10.4 4 10.4 5.6V8.6C10.4 9 10 9.3 9.6 9.3H1.4C1 9.3 0.6 9 0.6 8.6Z" fill="#fff" stroke="#555" stroke-width="0.9"/></svg>
<svg style="left:979px;top:32.3px" width="9.5" height="9.5" viewBox="0 0 9.5 9.5"><g fill="none" stroke="#333" stroke-width="1"><path d="M8.2 4A3.6 3.6 0 0 0 1.6 2.6"/><path d="M1.3 5.5A3.6 3.6 0 0 0 7.9 6.9"/></g><path d="M8.9 1V4.4H5.7Z" fill="#333"/><path d="M0.6 8.5V5.1H3.8Z" fill="#333"/></svg>
<div class="a" style="left:997.9px;top:32px;width:9.2px;height:9.5px;border:1.1px solid #444;border-radius:1px"></div>
<div class="a" style="left:463.2px;top:482.4px;width:111px;height:22px;background:#e3293a;border-radius:3.5px"></div>
<div class="t" style="left:476px;top:490px;font-size:8.8px;color:#fff">1 Object Selected</div>
<svg style="left:554px;top:491.3px" width="5.5" height="5.5" viewBox="0 0 5.5 5.5"><path d="M0.4 0.4L5.1 5.1M5.1 0.4L0.4 5.1" stroke="#fff" stroke-width="0.8"/></svg>
<div class="a" style="left:30px;top:543px;width:692px;height:4.4px;background:linear-gradient(#6f7376,#7f8387);border-radius:1px"></div>
<div class="a" style="left:513.7px;top:537.7px;width:19px;height:9px;background:#8a8d92;border-radius:2px 2px 0 0"></div>
<svg style="left:518.7px;top:539.5px" width="9" height="4" viewBox="0 0 9 4"><path d="M1 3.5L4.5 0.8L8 3.5" fill="none" stroke="#fff" stroke-width="1"/></svg>
<div class="a" style="left:1020px;top:297.8px;width:3px;height:251px;background:#8c9090;border-radius:1.5px"></div>
</div>
</div></body></html>
